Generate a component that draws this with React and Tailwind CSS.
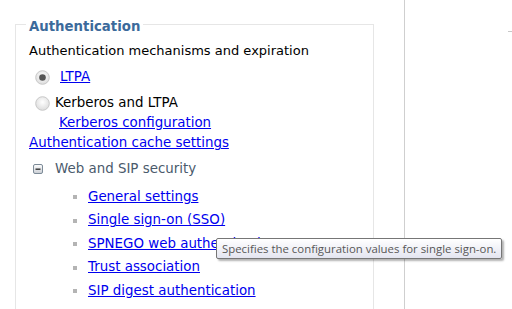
import React from "react";

const font = { fontFamily: '"DejaVu Sans", Verdana, sans-serif' };

function Radio({ checked }) {
  return (
    <svg width="15" height="15" viewBox="0 0 15 15" className="shrink-0">
      <defs>
        <radialGradient id={checked ? "rg1" : "rg2"} cx="50%" cy="40%" r="60%">
          <stop offset="0%" stopColor="#ffffff" />
          <stop offset="100%" stopColor="#dcdcdc" />
        </radialGradient>
      </defs>
      <circle cx="7.5" cy="7.5" r="6.8" fill={`url(#${checked ? "rg1" : "rg2"})`} stroke="#c8c8c8" strokeWidth="1" />
      {checked && <circle cx="7.5" cy="7.5" r="3.3" fill="#555" />}
    </svg>
  );
}

function Minus() {
  return (
    <svg width="10" height="10" viewBox="0 0 10 10" className="shrink-0">
      <defs>
        <linearGradient id="mg" x1="0" y1="0" x2="0" y2="1">
          <stop offset="0%" stopColor="#ffffff" />
          <stop offset="100%" stopColor="#c9cdd3" />
        </linearGradient>
      </defs>
      <rect x="0.5" y="0.5" width="9" height="9" rx="1.5" fill="url(#mg)" stroke="#7d8b98" />
      <rect x="2.5" y="4.5" width="5" height="1.4" fill="#333" />
    </svg>
  );
}

const links = [
  "General settings",
  "Single sign-on (SSO)",
  "SPNEGO web authentication",
  "Trust association",
  "SIP digest authentication",
];

export default function App() {
  return (
    <div className="relative flex w-[512px] h-[309px] overflow-hidden bg-white text-[13.4px] text-black" style={font}>
      <div className="w-[404px] shrink-0 pl-[15px] pt-[14px]">
        <fieldset className="w-[359px] h-[302px] border border-b-0 border-[#e6e6e6] pl-[10px]">
          <legend className="px-[3px] pt-[4px] text-[13.3px] font-bold text-[#3b6a9b] leading-[17px]">Authentication</legend>
          <div className="pl-[3px] pt-[6px]">
            <div className="h-[20px] flex items-center text-[13px]">Authentication mechanisms and expiration</div>
            <div className="flex items-center h-[20px] mt-[6px] pl-[6px]">
              <Radio checked />
              <a className="ml-[10px] text-[#0000ee] underline">LTPA</a>
            </div>
            <div className="flex items-center h-[20px] mt-[6px] pl-[6px]">
              <Radio />
              <span className="ml-[5px]">Kerberos and LTPA</span>
            </div>
            <div className="h-[20px] flex items-center pl-[30px]">
              <a className="text-[#0000ee] underline">Kerberos configuration</a>
            </div>
            <div className="h-[20px] flex items-center">
              <a className="text-[#0000ee] underline">Authentication cache settings</a>
            </div>
            <div className="flex items-center h-[20px] mt-[6px] pl-[4px]">
              <Minus />
              <span className="ml-[12px] text-[#4a5a6c]">Web and SIP security</span>
            </div>
            <ul className="mt-[8px]">
              {links.map((l) => (
                <li key={l} className="flex items-center h-[20px] mt-[3.5px] pl-[44px]">
                  <span className="w-[4px] h-[4px] bg-[#b4b4b4] shrink-0" />
                  <a className="ml-[11px] text-[#0000ee] underline whitespace-nowrap">{l}</a>
                </li>
              ))}
            </ul>
          </div>
        </fieldset>
      </div>
      <div className="flex-1 border-l border-[#cfcfcf] flex justify-end pt-[31px]">
        <div className="w-[4px] h-[1px] bg-[#c8c8c8]" />
      </div>
      <div
        className="absolute left-[216px] top-[238px] h-[21px] px-[5px] flex items-center border border-[#767676] rounded-[2px] bg-gradient-to-b from-white to-[#e4e5f0] text-[11.4px] text-[#575757] whitespace-nowrap shadow-[2px_2px_2px_rgba(0,0,0,0.3)]"
        style={{ fontFamily: '"Open Sans", "Noto Sans", sans-serif' }}
      >
        Specifies the configuration values for single sign-on.
      </div>
    </div>
  );
}
